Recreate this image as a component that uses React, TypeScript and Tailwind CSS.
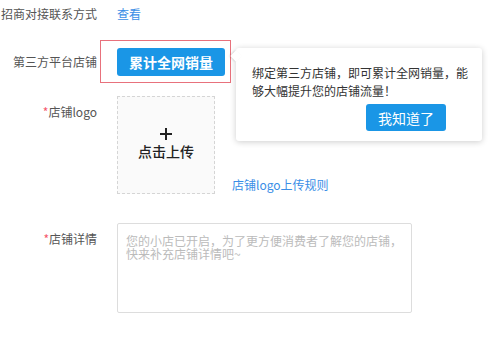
import React from "react"

const font = "font-['Microsoft_YaHei','Noto_Sans_CJK_SC',sans-serif]"

export default function App() {
    return (
        <div className={`relative w-[499px] h-[337px] bg-white text-[12px] text-[#555] ${font}`}>
            {/* 招商对接 */}
            <div className="flex items-center h-[28px]">
                <div className="w-[97px] text-right whitespace-nowrap">招商对接联系方式</div>
                <span className="ml-[20px] text-[#3a8ee6] cursor-pointer">查看</span>
            </div>

            {/* 第三方平台店铺 */}
            <div className="flex items-center mt-[12px]">
                <div className="w-[97px] text-right">第三方平台店铺</div>
                <div className="ml-[3px] border border-[#e8717c] pl-[16px] pr-[5px] pt-[7px] pb-[6px]">
                    <button className="w-[108px] h-[28px] rounded-[3px] bg-[#1a96e6] text-white text-[14px] font-bold leading-none">
                        累计全网销量
                    </button>
                </div>
            </div>

            {/* 店铺logo */}
            <div className="flex items-start mt-[13px]">
                <div className="w-[97px] text-right pt-[7px] leading-[17px]">
                    <span className="text-[#f5576c]">*</span>店铺logo
                </div>
                <div className="ml-[20px] w-[98px] h-[98px] border border-dashed border-[#d5d5d5] bg-[#fafafa] flex flex-col items-center pt-[30px] text-[#222] text-[14px] font-medium">
                    <svg width="14" height="14" viewBox="0 0 14 14" className="mb-px">
                        <path d="M7 1v12M1 7h12" stroke="#222" strokeWidth="2" />
                    </svg>
                    <span className="leading-[18px]">点击上传</span>
                </div>
                <span className="self-end ml-[17px] mb-[1px] text-[#3a8ee6] leading-[16px]">店铺logo上传规则</span>
            </div>

            {/* 店铺详情 */}
            <div className="flex items-start mt-[29px]">
                <div className="w-[97px] text-right pt-[7px] leading-[17px]">
                    <span className="text-[#f5576c]">*</span>店铺详情
                </div>
                <textarea
                    className={`ml-[20px] w-[295px] h-[90px] resize-none border border-[#ddd] rounded-[2px] pl-[8px] pr-[4px] pt-[10px] text-[12px] leading-[13px] placeholder:text-[#bbb] outline-none ${font}`}
                    placeholder="您的小店已开启，为了更方便消费者了解您的店铺，快来补充店铺详情吧~"
                />
            </div>

            {/* 提示气泡 */}
            <div className="absolute left-[236px] top-[48px] w-[246px] h-[93px] bg-white rounded-[3px] shadow-[0_1px_6px_rgba(0,0,0,0.2)] pl-[16px] pt-[16px]">
                <div className="absolute left-[-4px] top-[4px] w-[8px] h-[8px] bg-white rotate-45 shadow-[-1px_1px_2px_rgba(0,0,0,0.12)]" />
                <p className="relative leading-[18px] text-[#333] w-[220px]">
                    绑定第三方店铺，即可累计全网销量，能够大幅提升您的店铺流量！
                </p>
                <div className="flex justify-end pr-[36px] mt-[4px]">
                    <button className="w-[80px] h-[27px] rounded-[3px] bg-[#1a96e6] text-white text-[14px] leading-none">
                        我知道了
                    </button>
                </div>
            </div>
        </div>
    )
}
